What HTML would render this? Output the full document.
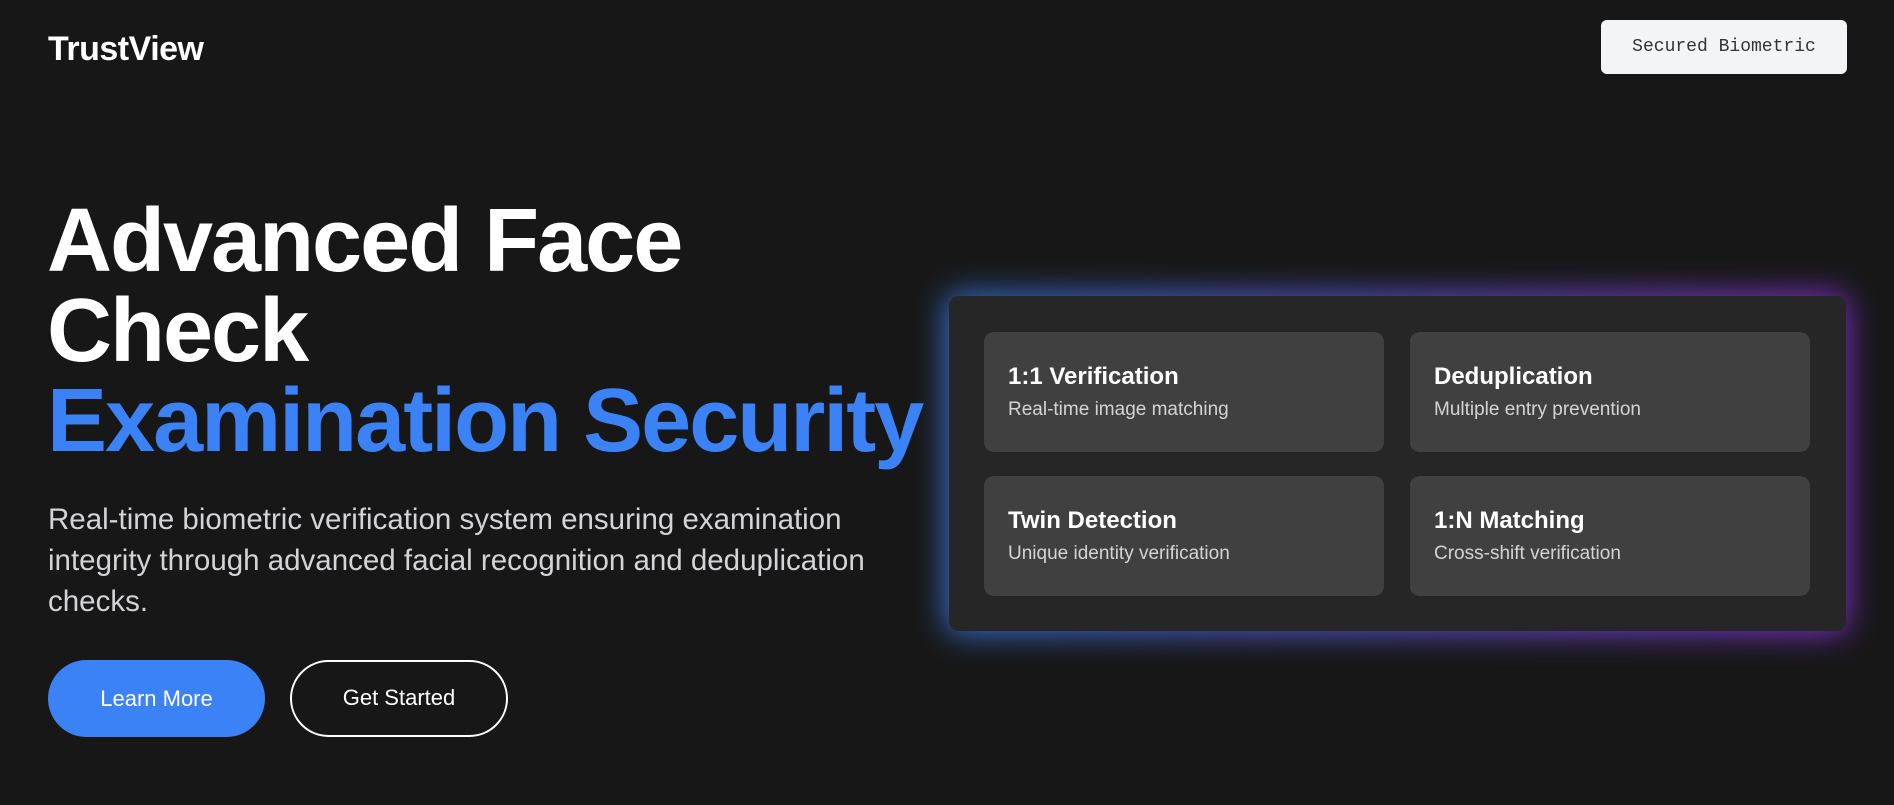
<!DOCTYPE html>
<html><head><meta charset="utf-8"><style>
*{margin:0;padding:0;box-sizing:border-box}
html,body{width:1894px;height:805px;overflow:hidden;background:#171717;font-family:"Liberation Sans",sans-serif;color:#fff}
.logo{position:absolute;left:48px;top:30px;font-size:34px;font-weight:bold;letter-spacing:-0.5px}
.badge{position:absolute;left:1601px;top:20px;width:246px;height:54px;background:#f3f4f6;border-radius:6px;color:#333;font-family:"Liberation Mono",monospace;font-size:18px;line-height:54px;text-align:center}
h1{position:absolute;left:47px;top:196px;font-size:90px;line-height:90px;letter-spacing:-2px;font-weight:bold;white-space:nowrap}
h1 span{color:#3b82f6}
p.lead{position:absolute;left:48px;top:499px;width:860px;font-size:29.5px;line-height:41px;color:#d4d4d8}
.btn{position:absolute;top:660px;height:77px;border-radius:40px;font-size:22px;line-height:77px;text-align:center}
.b1{left:48px;width:217px;background:#3b82f6}
.b2{left:290px;width:218px;border:2.5px solid #fff;line-height:72px}
.glow{position:absolute;left:946px;top:294px;width:901px;height:339px;border-radius:12px;background:linear-gradient(90deg,#3b82f6,#9333ea);filter:blur(16px);opacity:.85}
.card{position:absolute;left:949px;top:296px;width:897px;height:335px;border-radius:10px;background:#262626}
.item{position:absolute;width:400px;height:120px;background:#404040;border-radius:10px;padding:0 24px}
.item b{display:block;margin-top:30px;font-size:24px;line-height:30px}
.item i{display:block;font-style:normal;margin-top:6px;font-size:19px;line-height:24px;color:#d4d4d4}
</style></head><body>
<div class="logo">TrustView</div>
<div class="badge">Secured Biometric</div>
<h1>Advanced Face<br>Check<br><span>Examination Security</span></h1>
<p class="lead">Real-time biometric verification system ensuring examination integrity through advanced facial recognition and deduplication checks.</p>
<div class="btn b1">Learn More</div>
<div class="btn b2">Get Started</div>
<div class="glow"></div>
<div class="card">
<div class="item" style="left:35px;top:36px"><b>1:1 Verification</b><i>Real-time image matching</i></div>
<div class="item" style="left:461px;top:36px"><b>Deduplication</b><i>Multiple entry prevention</i></div>
<div class="item" style="left:35px;top:180px"><b>Twin Detection</b><i>Unique identity verification</i></div>
<div class="item" style="left:461px;top:180px"><b>1:N Matching</b><i>Cross-shift verification</i></div>
</div>
</body></html>
